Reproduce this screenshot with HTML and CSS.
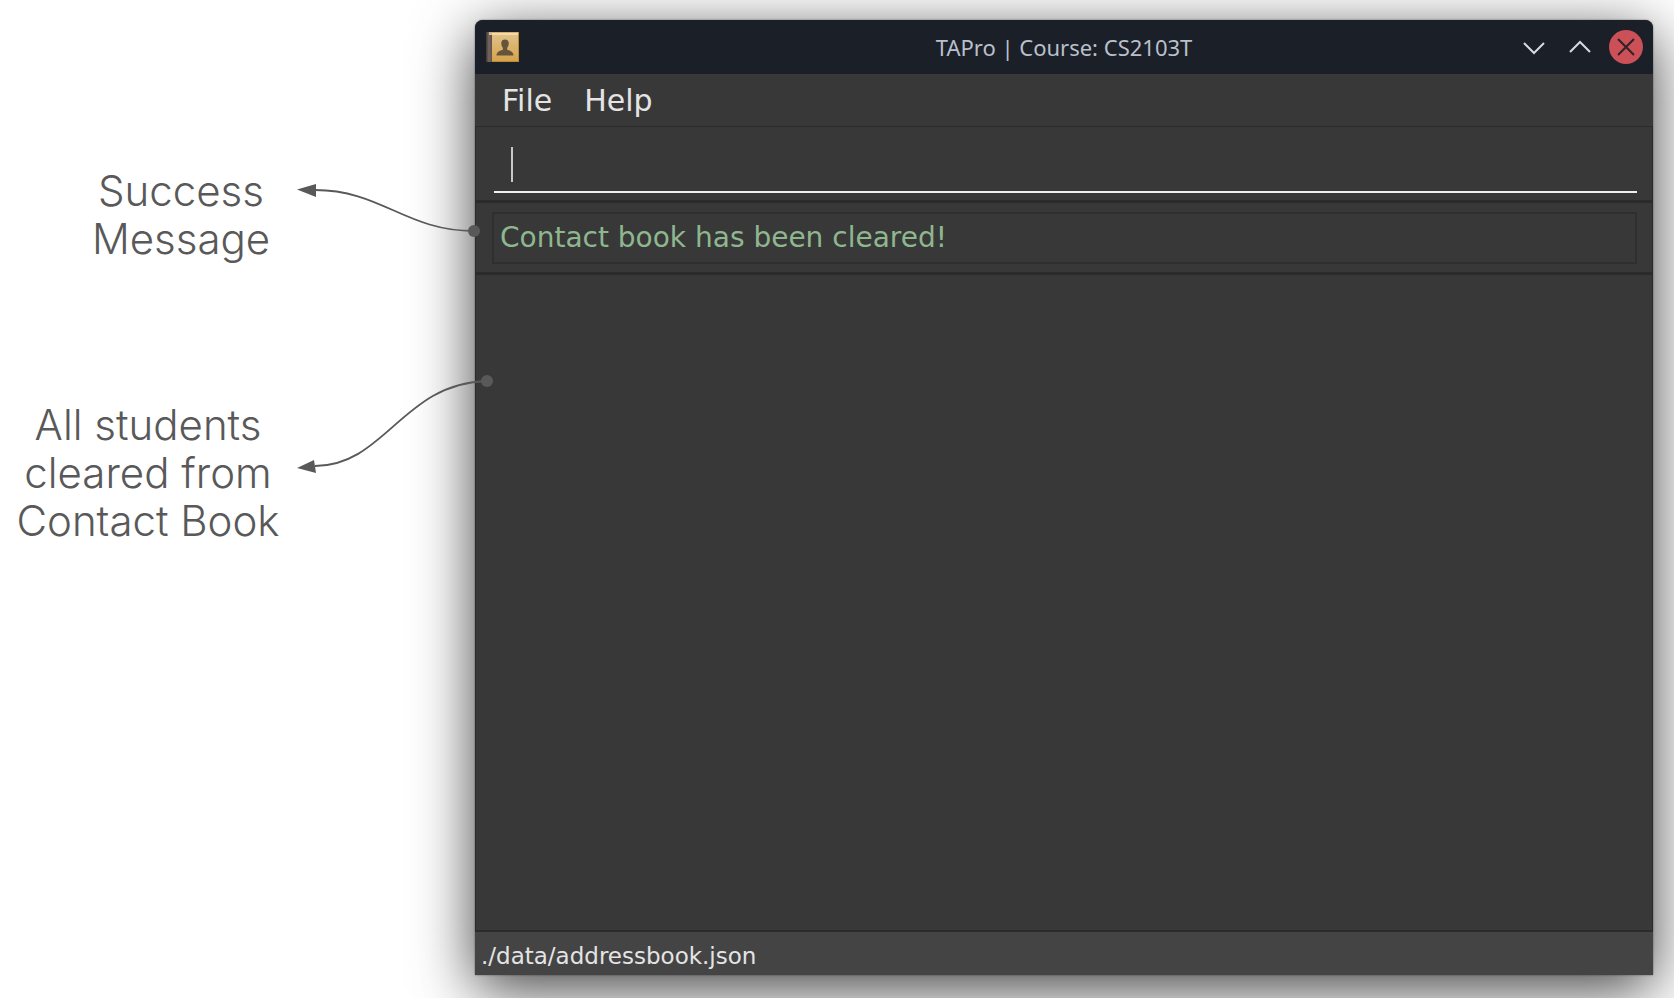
FILE: index.html
```html
<!DOCTYPE html>
<html lang="en">
<head>
<meta charset="utf-8">
<title>TAPro | Course: CS2103T</title>
<link rel="stylesheet" href="styles.css">
</head>
<body>
<div class="page">
  <aside class="notes">
    <p class="note note-message">Success<br>Message</p>
    <p class="note note-list">All students<br>cleared from<br>Contact Book</p>
  </aside>

  <main class="window">
    <header class="titlebar">
      <svg class="app-icon" width="34" height="32" viewBox="0 0 34 32" aria-hidden="true">
        <defs>
          <linearGradient id="cover" x1="0" y1="0" x2="0" y2="1">
            <stop offset="0" stop-color="#e2c48c"/>
            <stop offset="1" stop-color="#d3a34c"/>
          </linearGradient>
          <linearGradient id="spine" x1="0" y1="0" x2="1" y2="0">
            <stop offset="0" stop-color="#3e3636"/>
            <stop offset="0.4" stop-color="#75655f"/>
            <stop offset="1" stop-color="#5c4b45"/>
          </linearGradient>
        </defs>
        <rect x="1" y="1" width="7" height="30" rx="1" fill="url(#spine)"/>
        <rect x="7" y="1" width="27" height="30" rx="1" fill="url(#cover)"/>
        <path d="M4 1.500H33" stroke="#e0b04f"/>
        <path d="M4 3H33" stroke="#f0e2c8" stroke-width="1.500"/>
        <path d="M7 30.500H33.500V2" fill="none" stroke="#c08a2c"/>
        <path d="M20 8.500c2.700 0 4 1.800 3.700 4.600-.2 1.700-.8 2.800-1.500 3.600v2c2.600 1 6.300 1.900 6.300 5.800h-17c0-3.900 3.700-4.800 6.300-5.800v-2c-.7-.8-1.300-1.900-1.500-3.600-.3-2.800 1-4.600 3.700-4.600z" fill="#65533a"/>
      </svg>
      <h1 class="title">TAPro | Course: CS2103T</h1>
      <div class="controls">
        <button class="control" type="button" aria-label="Minimize">
          <svg width="34" height="34" viewBox="0 0 34 34" aria-hidden="true"><path d="M7 13l10 10 10-10" fill="none" stroke="#d3dae3" stroke-width="2"/></svg>
        </button>
        <button class="control" type="button" aria-label="Maximize">
          <svg width="34" height="34" viewBox="0 0 34 34" aria-hidden="true"><path d="M7 22l10-10 10 10" fill="none" stroke="#d3dae3" stroke-width="2"/></svg>
        </button>
        <button class="control" type="button" aria-label="Close">
          <svg width="34" height="34" viewBox="0 0 34 34" aria-hidden="true"><circle cx="17" cy="17" r="17" fill="#cb5057"/><path d="M9 9l16 16M25 9L9 25" fill="none" stroke="#2f2228" stroke-width="2"/></svg>
        </button>
      </div>
    </header>

    <nav class="menubar">
      <button class="menu" type="button">File</button>
      <button class="menu" type="button">Help</button>
    </nav>

    <form class="command">
      <input class="command-input" type="text" aria-label="Command">
      <span class="caret"></span>
    </form>

    <section class="result">
      <output class="result-text">Contact book has been cleared!</output>
    </section>

    <section class="list" aria-label="Students"></section>

    <footer class="statusbar">./data/addressbook.json</footer>
  </main>

  <svg class="connectors" width="200" height="320" viewBox="0 0 200 320" aria-hidden="true">
    <g fill="none" stroke="#595959" stroke-width="1.800">
      <path d="M17 20C83 20 108 61 176 61"/>
      <path d="M17 296C87 296 105 213 189 211"/>
    </g>
    <g fill="#595959">
      <path d="M-1 19.500L18 14V27z"/>
      <path d="M-1 298L16 290L18 303z"/>
      <circle cx="176" cy="61" r="6"/>
      <circle cx="189" cy="211" r="6"/>
    </g>
  </svg>
</div>
</body>
</html>
```
FILE: styles.css
```css
* {
  box-sizing: border-box;
}

body {
  margin: 0;
  background: #fff;
}

.page {
  position: relative;
  display: grid;
  grid-template-columns: 475px minmax(0, 1fr);
  min-height: 100vh;
  padding: 20px 21px 23px 0;
  overflow: hidden;
}

.notes {
  display: flex;
  flex-direction: column;
  gap: 138px;
  padding-top: 147px;
}

.note {
  margin: 0;
  color: #595959;
  font: 300 42px/48px Inter, sans-serif;
  text-align: center;
}

.note-message {
  width: 362px;
}

.note-list {
  width: 296px;
}

.window {
  display: flex;
  flex-direction: column;
  border-radius: 8px 8px 0 0;
  background: #383838;
  color: #e4e4e4;
  font-family: "DejaVu Sans", sans-serif;
  box-shadow: 0 0 2px rgba(0, 0, 0, 0.5), 0 14px 60px rgba(0, 0, 0, 0.75);
}

.titlebar {
  display: grid;
  grid-template-columns: 1fr auto 1fr;
  align-items: center;
  height: 54px;
  padding: 0 10px 1px;
  border-radius: 8px 8px 0 0;
  background: #1b1f27;
}

.title {
  margin: 0;
  padding-top: 1px;
  color: #b9c0cc;
  font: 400 22px/30px "Noto Sans", sans-serif;
}

.controls {
  display: flex;
  justify-content: flex-end;
  gap: 12px;
}

.control {
  display: flex;
  padding: 0;
  border: 0;
  background: none;
}

.menubar {
  display: flex;
  gap: 32px;
  height: 52px;
  padding: 2px 27px 0;
}

.menu {
  padding: 0;
  border: 0;
  background: none;
  color: #e4e4e4;
  font: 30px/50px "DejaVu Sans", sans-serif;
}

.command {
  position: relative;
  height: 77px;
  padding: 8px 15px 8px 18px;
  border: solid #2b2b2b;
  border-width: 1px 1px 3px;
}

.command-input {
  display: block;
  width: 100%;
  height: 58px;
  padding: 0 16px;
  border: 0;
  border-bottom: 2px solid #f0f0f0;
  outline: 0;
  background: none;
  color: #fff;
  font: 28px/40px "DejaVu Sans", sans-serif;
}

.caret {
  position: absolute;
  top: 20px;
  left: 35px;
  width: 2px;
  height: 35px;
  background: #c8c8c8;
}

.result {
  height: 72px;
  padding: 9px 15px 8px 16px;
  border: solid #2b2b2b;
  border-width: 0 1px 3px;
}

.result-text {
  display: block;
  height: 52px;
  padding: 0 6px;
  border: 2px solid #2f2f2f;
  color: #8fb78f;
  font-size: 28px;
  line-height: 48px;
}

.list {
  flex: 1;
  border: solid #2b2b2b;
  border-width: 0 1px 2px;
}

.statusbar {
  height: 43px;
  padding: 0 6px;
  background: #444;
  font-size: 23px;
  line-height: 48px;
}

.connectors {
  position: absolute;
  top: 170px;
  left: 298px;
  overflow: visible;
}
```
